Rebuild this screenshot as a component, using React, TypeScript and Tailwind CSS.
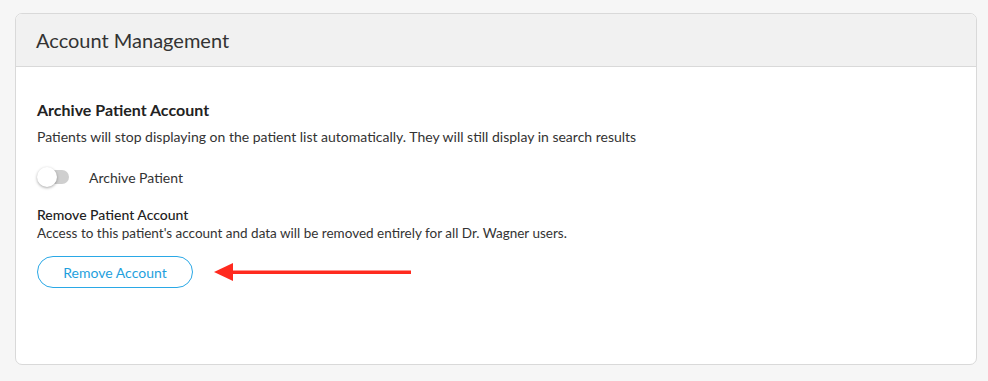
import React, { useState } from "react";

export default function App() {
  const [archived, setArchived] = useState(false);

  return (
    <div className="w-[988px] h-[381px] bg-[#f6f6f6] pt-[13px] pl-[15px] pr-[11px] font-['Lato',sans-serif]">
      <div className="h-[352px] bg-white border border-[#d9d9d9] rounded-[7px] overflow-hidden flex flex-col">
        {/* Header */}
        <div className="h-[53px] bg-[#f1f1f1] border-b border-[#d9d9d9] flex items-center px-[20px]">
          <h1 className="text-[20px] text-[#333] font-normal leading-none">Account Management</h1>
        </div>

        {/* Body */}
        <div className="px-[21px] pt-[33px] flex flex-col">
          <h2 className="text-[16px] font-bold text-[#222] leading-[20px]">Archive Patient Account</h2>
          <p className="mt-[8px] text-[14px] text-[#333] leading-[18px]">
            Patients will stop displaying on the patient list automatically. They will still display in search results
          </p>

          <div className="mt-[16px] flex items-center gap-[20px] h-[30px]">
            <button
              onClick={() => setArchived(!archived)}
              className="relative w-[32px] h-[20px] flex items-center"
              aria-pressed={archived}
            >
              <span className={`block w-[30px] h-[14px] ml-[2px] rounded-full ${archived ? "bg-[#9fd6f2]" : "bg-[#cfcfcf]"}`} />
              <span
                className={`absolute top-0 w-[20px] h-[20px] rounded-full bg-white shadow-[0_1px_3px_rgba(0,0,0,0.35)] ${archived ? "left-[13px]" : "left-0"}`}
              />
            </button>
            <span className="text-[14px] text-[#333]">Archive Patient</span>
          </div>

          <h3 className="mt-[14px] text-[14px] font-medium text-[#222] leading-[18px]">Remove Patient Account</h3>
          <p className="text-[13.5px] text-[#333] leading-[18px]">
            Access to this patient's account and data will be removed entirely for all Dr. Wagner users.
          </p>

          <div className="mt-[14px] flex items-center">
            <button className="w-[156px] h-[32px] rounded-full border border-[#2aa8e6] text-[#1f9fdd] text-[14px] bg-white">
              Remove Account
            </button>
            <svg width="200" height="20" viewBox="0 0 200 20" className="ml-[21px]">
              <polygon points="0,10 19,1 19,19" fill="#ff2a1f" />
              <rect x="18" y="8.5" width="179" height="3.5" fill="#ff2a1f" />
            </svg>
          </div>
        </div>
      </div>
    </div>
  );
}
